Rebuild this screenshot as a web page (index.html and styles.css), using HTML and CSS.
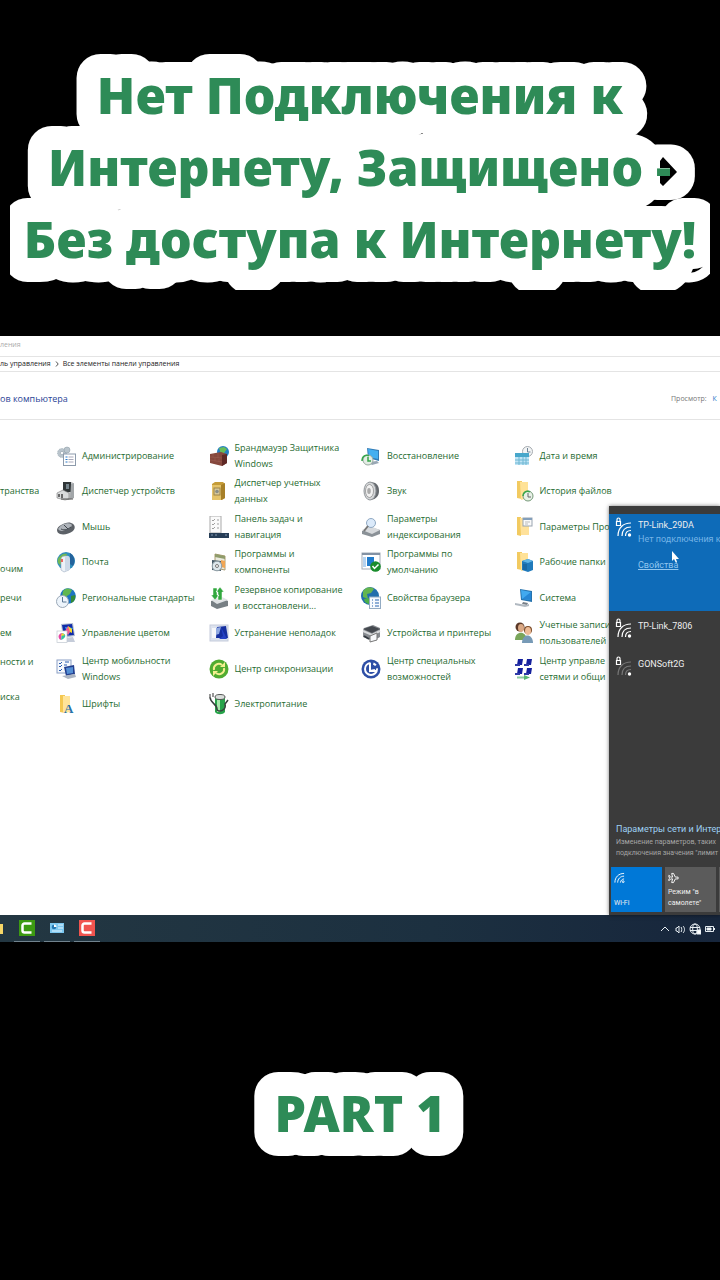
FILE: index.html
```
<!DOCTYPE html>
<html lang="ru">
<head>
<meta charset="utf-8">
<meta name="viewport" content="width=device-width, initial-scale=1">
<title>Нет Подключения к Интернету</title>
<link rel="stylesheet" href="styles.css">
</head>
<body>
<header class="intro">
  <h1>
    <svg class="caption" viewBox="0 0 700 240">
      <text x="350" y="64">Нет Подключения к</text>
      <text x="350" y="136">Интернету, Защищено -</text>
      <text x="350" y="208">Без доступа к Интернету!</text>
      <path d="M653 107L667 122L653 136L650 133V126H660V118H650V111Z"/>
    </svg>
  </h1>
</header>

<main class="desktop">
  <section class="window">
    <div class="titlebar">ления</div>
    <nav class="address"><a href="#">ль управления</a><svg viewBox="0 0 4 6" aria-hidden="true"><path d="M1 0.5L3.2 3L1 5.5"/></svg><a href="#">Все элементы панели управления</a></nav>
    <div class="heading">
      <h2>ов компьютера</h2>
      <span class="view">Просмотр: <a href="#">К</a></span>
    </div>
    <div class="items">
      <ul class="col cut">
        <li class="r2"><a href="#">транства</a></li>
        <li class="r4 low"><a href="#">очим</a></li>
        <li class="r5"><a href="#">речи</a></li>
        <li class="r6"><a href="#">ем</a></li>
        <li class="r7 high"><a href="#">ности и</a></li>
        <li class="r8 high"><a href="#">иска</a></li>
      </ul>
      <ul class="col">
        <li><a href="#"><svg viewBox="0 0 20 20"><g fill="#b9c4cc" stroke="#8796a1" stroke-width=".5"><circle cx="6" cy="7" r="4.5" stroke-dasharray="1.5 1"/><circle cx="11" cy="4" r="3"/><circle cx="6" cy="7" r="1.6" fill="#fff"/></g><rect x="7.500" y="8" width="12" height="11.500" fill="#fff" stroke="#8c9aab"/><path d="M9.500 11h2M9.500 13.500h2M9.500 16h2" stroke="#2878c8" stroke-width="1.200"/><path d="M12.500 11h5M12.500 13.500h5M12.500 16h5" stroke="#aab"/></svg><span>Администрирование</span></a></li>
        <li><a href="#"><svg viewBox="0 0 20 20"><path d="M7 1h9l2 2v14l-5 2H7z" fill="#c3c5c7"/><path d="M7 1h8v10H7z" fill="#303638"/><path d="M10 3h3v5h-3z" fill="#75848c"/><path d="M15 3l3-1v15l-4 1z" fill="#a2a6a9"/><path d="M1 12l6-3 6 3v6l-4 1-8-2z" fill="#d9dbdc" stroke="#777" stroke-width=".6"/><path d="M3 13v3M6 13v4" stroke="#444" stroke-width="1.500"/><path d="M5 18h12" stroke="#555"/></svg><span>Диспетчер устройств</span></a></li>
        <li><a href="#"><svg viewBox="0 0 20 20"><path d="M1 13C1 9 11 4 15 6c4 1 5 5 2 8-4 3-9 4-13 3-2-1-3-2-3-4z" fill="#5c6167"/><path d="M2 12c3-5 9-7 13-5 2 1 0 4-3 5-4 2-8 3-10 0z" fill="#aeb3b9"/><path d="M8 8l4 4M5 12c4 2 7 0 10-2" stroke="#3f454b" fill="none"/></svg><span>Мышь</span></a></li>
        <li><a href="#"><svg viewBox="0 0 20 20"><circle cx="10" cy="9" r="9" fill="#318ebd"/><path d="M3 5c3-3 5-4 8-3l-2 5-5 6C1 11 1 8 3 5z" fill="#72b856"/><path d="M14 1c4 2 6 8 3 13l-3-2z" fill="#24639c"/><path d="M5 7c0-4 8-4 8 0v11l-5 2-3-2z" fill="#edf2f8" stroke="#9aabbf" stroke-width=".6"/><path d="M9 6c0-3 5-3 5 1v10l-5 2z" fill="#ccd9e8"/><path d="M6 7v3" stroke="#ea3c33" stroke-width="1.500"/></svg><span>Почта</span></a></li>
        <li><a href="#"><svg viewBox="0 0 20 20"><circle cx="12" cy="8" r="7.800" fill="#1d74c2"/><path d="M7 3c4-4 7-2 9-1l-2 4-3 2-1 4-4-3z" fill="#60b750"/><path d="M15 8l4-1c1 4-1 7-4 8z" fill="#338a38"/><circle cx="6.500" cy="13.500" r="6" fill="#edf4fb" stroke="#9ba8b7"/><path d="M6.500 9v5h4" fill="none" stroke="#5d7894"/></svg><span>Региональные стандарты</span></a></li>
        <li><a href="#"><svg viewBox="0 0 20 20"><path d="M5 1l12-1 2 13-12 2z" fill="#b4bfd2"/><path d="M6 2l10-1 2 11-10 1z" fill="#112ca8"/><path d="M9 4l3 8 5-7z" fill="#34a7ee"/><path d="M12 3v5l4 2V6z" fill="#f7d92d"/><path d="M12 3l-3 5 3 4 2-3z" fill="#ef5c92"/><path d="M9 15l8-1 2 5H9z" fill="#c5ccd9"/><rect x="1" y="8" width="10" height="11.500" fill="#fff" stroke="#c1c8d0" stroke-width=".7"/><path d="M6 10c-5 1-4 6-1 7z" fill="#e647a4"/><path d="M6 10c5 1 4 5-1 7z" fill="#35c0a0"/><path d="M6 10l3 2-4 1z" fill="#ffd52c"/></svg><span>Управление цветом</span></a></li>
        <li><a href="#"><svg viewBox="0 0 20 20"><rect x="1" y="1" width="14" height="13" fill="#f7f9fc" stroke="#8ba0c5"/><path d="M3 4l1 1 2-2M3 7l1 1 2-2M3 11l1 1 2-2M9 3h4M8 6h3" fill="none" stroke="#285cb1"/><path d="M8 8l10-2 1 9-9 2z" fill="#233f8f"/><path d="M10 9l7-1v6l-6 1z" fill="#548fd5"/><path d="M6 17l13-2 1 3-8 2z" fill="#abb4c2"/></svg><span>Центр мобильности Windows</span></a></li>
        <li><a href="#"><svg viewBox="0 0 20 20"><path d="M4 1h5v18l-5-1z" fill="#f4c852"/><path d="M7 2h7v16l-5 1H7z" fill="#ffe49a"/><text x="8" y="19" class="glyph">A</text></svg><span>Шрифты</span></a></li>
      </ul>
      <ul class="col">
        <li><a href="#"><svg viewBox="0 0 20 20"><circle cx="14" cy="6" r="6" fill="#2580c3"/><path d="M10 2l5-1 3 2-3 4-3 1z" fill="#69bd58"/><path d="M1 8l11-2 6 2v9l-5 3-12-3z" fill="#86483d"/><path d="M13 9l5-1v9l-5 3z" fill="#5f2926"/><path d="M1 11l12 1M1 14l12 2M4 8v3M9 7v5M6 12v3M10 13v3" stroke="#a5685d" stroke-width=".4"/></svg><span>Брандмауэр Защитника Windows</span></a></li>
        <li><a href="#"><svg viewBox="0 0 20 20"><path d="M3 3l3-2h8l2 2v14l-3 2H3z" fill="#c59c38"/><path d="M3 4h9v15H3z" fill="#e5c369"/><path d="M12 4l4-2v15l-4 2z" fill="#a78028"/><rect x="5" y="7" width="6" height="7" fill="#d7c99b" stroke="#9c8348"/><circle cx="8" cy="10.500" r="1.800" fill="#8a8d83"/></svg><span>Диспетчер учетных данных</span></a></li>
        <li><a href="#"><svg viewBox="0 0 20 22"><rect x="1" y="0" width="11" height="17" fill="#fafafa" stroke="#aaa"/><path d="M3 4l1 1 2-2M3 8l1 1 2-2M3 12l1 1 2-2M8 4h2M8 8h2M8 12h2" fill="none" stroke="#777" stroke-width=".7"/><rect x="0" y="17" width="20" height="5" fill="#263d56"/><path d="M2 19h2M6 19h2M16 19h2" stroke="#8299b1"/></svg><span>Панель задач и навигация</span></a></li>
        <li><a href="#"><svg viewBox="0 0 20 20"><path d="M6 2l10 2v14l-10-2z" fill="#e9eadf" stroke="#ad9d70"/><path d="M6 2l10 2v3L6 5z" fill="#8f9c6b"/><path d="M12 8l4 1v7l-4-1z" fill="#f2a654"/><path d="M3 8l9 1v10l-9-1z" fill="#465a68"/><circle cx="8" cy="14" r="4.800" fill="#dce6eb" stroke="#8c9ba3"/><circle cx="8" cy="14" r="1.500" fill="#fff" stroke="#777"/></svg><span>Программы и компоненты</span></a></li>
        <li><a href="#"><svg viewBox="0 0 20 22"><path d="M2 14l11-3 6 3v5l-11 3-6-3z" fill="#777f84"/><path d="M2 13l11-3 6 3-11 4z" fill="#dfe2e4"/><path d="M4 1h4v7h2l-4 5-4-5h2zM13 13V5h2l-4-5-4 5h2v8z" fill="#31a83e" stroke="#fff" stroke-width=".5"/></svg><span>Резервное копирование и восстановлени...</span></a></li>
        <li><a href="#"><svg viewBox="0 0 20 20"><rect x="1" y="2" width="18" height="16" fill="#dce2ee" stroke="#c5ccdb"/><path d="M8 4l9-1 2 12H7z" fill="#162f9f"/><path d="M7 5l5-1-2 7-4 1z" fill="#90a9e1"/><path d="M12 4l2 9-4 3h8" fill="#2541c4"/><rect x="3" y="5" width="4" height="10" fill="#f6f7fa"/></svg><span>Устранение неполадок</span></a></li>
        <li><a href="#"><svg viewBox="0 0 20 20"><circle cx="10" cy="10" r="9.500" fill="#51ac31"/><path d="M5 11a5 5 0 0 1 8-5M15 9a5 5 0 0 1-8 5" fill="none" stroke="#f5ef90" stroke-width="2"/><path d="M11 8h5V3zM9 12H4v5z" fill="#f5ef90"/></svg><span>Центр синхронизации</span></a></li>
        <li><a href="#"><svg viewBox="0 0 20 22"><path d="M6 5h10v14c-2 3-8 3-10 0z" fill="#27a34a"/><path d="M8 7h3v12H8z" fill="#a5e7aa"/><ellipse cx="11" cy="4" rx="5" ry="2.500" fill="#d9dedb" stroke="#555"/><path d="M1 4c0 6 7 7 7 12 0 4 10 2 8-5l3-4" fill="none" stroke="#383f3e" stroke-width="1.500"/><path d="M1 1v4M4 0v4" stroke="#777" stroke-width="1.500"/></svg><span>Электропитание</span></a></li>
      </ul>
      <ul class="col">
        <li><a href="#"><svg viewBox="0 0 20 20"><path d="M6 2l12 2v11L7 12z" fill="#327bb5"/><path d="M7 3l10 2v8L8 11z" fill="#44aff0"/><path d="M7 16l9-1 2 2-7 2z" fill="#98a7b4"/><circle cx="7" cy="14" r="5" fill="#e4ede5" stroke="#99aaa0"/><path d="M1 15c0-5 4-7 7-5M7 11v4h3" fill="none" stroke="#36a54a" stroke-width="1.500"/></svg><span>Восстановление</span></a></li>
        <li><a href="#"><svg viewBox="0 0 20 20"><path d="M9 1c7 0 9 4 9 9s-3 8-8 9z" fill="#65696e"/><ellipse cx="9" cy="10" rx="6" ry="9" fill="#d4d6d8" stroke="#92979b"/><ellipse cx="8.500" cy="10" rx="4" ry="6.500" fill="#f1f1f1" stroke="#777" stroke-width=".6"/><ellipse cx="8" cy="10" rx="1.800" ry="3" fill="#aaa"/></svg><span>Звук</span></a></li>
        <li><a href="#"><svg viewBox="0 0 20 20"><path d="M1 14l8-4 10 3v4l-8 3-10-3z" fill="#8a9197"/><path d="M1 13l8-4 10 4-8 4z" fill="#d7dadd"/><circle cx="10" cy="6" r="4.500" fill="#dbeafa" stroke="#90a9c3"/><path d="M7 9l-4 5" stroke="#777" stroke-width="2"/></svg><span>Параметры индексирования</span></a></li>
        <li><a href="#"><svg viewBox="0 0 20 20"><rect x="1" y="1" width="18" height="16" fill="#fff" stroke="#a2abb6"/><path d="M1 2h18" stroke="#8392a4" stroke-width="2"/><path d="M6 5h7v9H6z" fill="#217ccc"/><path d="M2 5h3v10H2z" fill="#b6d3ef"/><circle cx="14.500" cy="14.500" r="5.300" fill="#198c2c"/><path d="M11.500 14l2 2.500 4-4" fill="none" stroke="#fff" stroke-width="1.500"/></svg><span>Программы по умолчанию</span></a></li>
        <li><a href="#"><svg viewBox="0 0 20 22"><circle cx="9" cy="9" r="9" fill="#226eac"/><path d="M2 4c4-5 9-4 11-2l-3 4-4 1 1 5-5-2z" fill="#64b54f"/><path d="M3 12l5-1 1 6c-3 0-6-2-6-5z" fill="#4caf49"/><rect x="8.500" y="10" width="11" height="11.500" fill="#f7fafe" stroke="#93abc3"/><path d="M11 13h1M11 16h1M11 19h1M14 13h4M14 16h4M14 19h4" stroke="#2865af"/></svg><span>Свойства браузера</span></a></li>
        <li><a href="#"><svg viewBox="0 0 20 20"><path d="M3 5l9-3 7 3v9l-7 4-10-4V8z" fill="#878b90"/><path d="M2 6l9-3 8 3-8 4z" fill="#45494f"/><path d="M2 8l9 4 8-4" fill="none" stroke="#d7d9db" stroke-width="2"/><path d="M9 13l7-3v7l-7 2z" fill="#f6f8fa" stroke="#777"/><path d="M3 13l5 3" stroke="#343a40" stroke-width="2"/></svg><span>Устройства и принтеры</span></a></li>
        <li><a href="#"><svg viewBox="0 0 20 20"><circle cx="10" cy="10" r="9.500" fill="#2e4fa6"/><circle cx="10" cy="10" r="6" fill="none" stroke="#fff" stroke-width="2" stroke-dasharray="27 3 3 3"/><path d="M9 4v8l5-1M9 12h6" stroke="#fff" stroke-width="2" fill="none"/></svg><span>Центр специальных возможностей</span></a></li>
      </ul>
      <ul class="col">
        <li><a href="#"><svg viewBox="0 0 20 20"><circle cx="13.500" cy="5.500" r="5" fill="#f2f4f5" stroke="#a6abb0"/><path d="M13.500 2v4h3" fill="none" stroke="#708596"/><path d="M1 7h14v12H1z" fill="#c0e4f5"/><path d="M1 7h14v4H1z" fill="#47a7cb"/><path d="M1 14h14M1 17h14M5 11v8M9 11v8M12 11v8" stroke="#6eb7d3"/></svg><span>Дата и время</span></a></li>
        <li><a href="#"><svg viewBox="0 0 20 20"><path d="M3 0h5v18l-5-1z" fill="#f2ca60"/><path d="M6 1h8v16l-7 2z" fill="#ffe297"/><circle cx="14" cy="15" r="5" fill="#e8f1e7" stroke="#759978"/><path d="M14 12v4h3" fill="none" stroke="#666"/><path d="M9 15c0-4 4-6 7-4" fill="none" stroke="#39a44b" stroke-width="1.500"/></svg><span>История файлов</span></a></li>
        <li><a href="#"><svg viewBox="0 0 20 20"><path d="M3 0h4v19l-4-1z" fill="#f2ca60"/><path d="M6 1h9v17H7z" fill="#ffe19a"/><rect x="9" y="1" width="9" height="8" fill="#fafafa" stroke="#9aa5b1"/><path d="M9 2h9" stroke="#839fbb" stroke-width="2"/><path d="M11 5h5M11 7h3" stroke="#bbb"/></svg><span>Параметры Про</span></a></li>
        <li><a href="#"><svg viewBox="0 0 20 20"><path d="M3 0h5v18l-5-1z" fill="#f2ca60"/><path d="M6 1h8v16l-7 2z" fill="#ffe297"/><path d="M8 9l6-2 5 2v9l-5 2-6-2z" fill="#207abb"/><path d="M8 9l6-2 5 2-5 2z" fill="#5fb5e7"/><path d="M10 12v6M12 12v6" stroke="#15588d"/></svg><span>Рабочие папки</span></a></li>
        <li><a href="#"><svg viewBox="0 0 20 20"><path d="M6 1l12 2v11L7 12z" fill="#2673ae"/><path d="M7 2l10 2v8L8 11z" fill="#41a9ef"/><path d="M8 11l9-7v8z" fill="#2686d5"/><path d="M9 14l5 1-1 2-5-1z" fill="#777f88"/><path d="M1 15l11 2 3-1v2l-4 1-10-2z" fill="#b0b8c0"/></svg><span>Система</span></a></li>
        <li><a href="#"><svg viewBox="0 0 20 22"><circle cx="6" cy="5" r="4.500" fill="#5b3827"/><ellipse cx="7" cy="6" rx="3" ry="4" fill="#dba985"/><path d="M1 18c0-9 11-10 12 0z" fill="#79a55a"/><circle cx="14" cy="8" r="4" fill="#7b4b28"/><ellipse cx="14" cy="9" rx="3" ry="4" fill="#efbd98"/><path d="M8 21c0-10 11-10 11 0z" fill="#779ab6"/></svg><span>Учетные записи пользователей</span></a></li>
        <li><a href="#"><svg viewBox="0 0 20 22"><path d="M4 1h5l-1 6H3zM13 1h5l-1 6h-5zM4 10h5l-1 6H3zM13 10h5l-1 6h-5z" fill="#15209d"/><path d="M1 6h5v2H1zM10 6h5v2h-5zM1 15h5v2H1zM10 15h5v2h-5z" fill="#2f3aa8"/><path d="M3 19.500h10" stroke="#8fcba0" stroke-width="2"/><path d="M10 17l6 2.500-6 2.500z" fill="#58b871"/></svg><span>Центр управле<br>сетями и общи</span></a></li>
      </ul>
    </div>
  </section>

  <aside class="flyout">
    <ul class="networks">
      <li class="network active">
        <svg class="signal" viewBox="0 0 18 22"><path d="M2 4V2.500a1.500 1.500 0 0 1 3 0V4M1.500 4.500h4v4h-4z"/><path d="M3 19C3 11 8 6 16 6M7 19c0-6 3-9 9-9M10.500 19c0-4 2-5.500 5.500-5.500"/><circle cx="14.500" cy="18" r="1.700"/></svg>
        <div><strong>TP-Link_29DA</strong><p>Нет подключения к</p><a href="#">Свойства</a></div>
        <svg class="cursor" viewBox="0 0 8 12" aria-hidden="true"><path d="M1 0v10l2-2 2 4 1-1-1-3h3z"/></svg>
      </li>
      <li class="network">
        <svg class="signal" viewBox="0 0 18 22"><path d="M2 4V2.500a1.500 1.500 0 0 1 3 0V4M1.500 4.500h4v4h-4z"/><path d="M3 19C3 11 8 6 16 6M7 19c0-6 3-9 9-9M10.500 19c0-4 2-5.500 5.500-5.500"/><circle cx="14.500" cy="18" r="1.700"/></svg>
        <strong>TP-Link_7806</strong>
      </li>
      <li class="network">
        <svg class="signal" viewBox="0 0 18 22"><path d="M2 4V2.500a1.500 1.500 0 0 1 3 0V4M1.500 4.500h4v4h-4z"/><path class="faint" d="M3 19C3 11 8 6 16 6M7 19c0-6 3-9 9-9M10.500 19c0-4 2-5.500 5.500-5.500"/><circle cx="14.500" cy="18" r="1.700"/></svg>
        <strong>GONSoft2G</strong>
      </li>
    </ul>
    <div class="settings">
      <a href="#">Параметры сети и Интер</a>
      <p>Изменение параметров, таких<br>подключения значения "лимит</p>
    </div>
    <div class="tiles">
      <button class="tile on" type="button"><svg viewBox="0 0 12 12"><path d="M1 11C1 5 5 1 11 1M4 11c0-4 3-7 7-7M7 11c0-2 2-4 4-4"/><circle cx="10" cy="10" r="1"/></svg><span>Wi-Fi</span></button>
      <button class="tile" type="button"><svg viewBox="0 0 12 12"><path d="M1 3l2 2h2L4 1h2l2 4h3v2H8l-2 4H4l1-4H3L1 9V7l1-1-1-1z"/></svg><span>Режим "в самолете"</span></button>
      <button class="tile" type="button" aria-label="Точка доступа"></button>
    </div>
  </aside>

  <footer class="taskbar">
    <div class="apps">
      <button type="button" aria-label="Проводник"><svg class="edge" viewBox="0 0 3 12"><path d="M0 1h3v10H0z" fill="#f5d667"/></svg></button>
      <button type="button" aria-label="Camtasia"><svg viewBox="0 0 16 16"><path d="M0 0h16v16H0z" fill="#3c9a12"/><path d="M12.500 3.500h-7a2 2 0 0 0-2 2v5a2 2 0 0 0 2 2h7" fill="none" stroke="#fff" stroke-width="2.500"/></svg></button>
      <button type="button" aria-label="Панель управления"><svg viewBox="0 0 16 16"><path d="M1 3h14v10H1z" fill="#7cc7ef"/><circle cx="5" cy="7" r="2.300" fill="#2478b2"/><path d="M5 7V4.500A2.500 2.500 0 0 1 7.500 7z" fill="#fff"/><path d="M9 5h5M9 8h5M3 11h10" stroke="#e4f5ff"/></svg></button>
      <button type="button" aria-label="Запись экрана"><svg viewBox="0 0 16 16"><path d="M0 0h16v16H0z" fill="#f0544f"/><path d="M12.500 3.500h-7a2 2 0 0 0-2 2v5a2 2 0 0 0 2 2h7" fill="none" stroke="#fff" stroke-width="2.500"/></svg></button>
    </div>
    <div class="tray">
      <svg viewBox="0 0 12 12"><path d="M2 8l4-4 4 4"/></svg>
      <svg viewBox="0 0 12 12"><path d="M2 5v3h1l2 2V3L3 5zM7 4c1 1 1 4 0 5M9 3c2 2 2 5 0 7"/></svg>
      <svg viewBox="0 0 12 12"><circle cx="6" cy="6" r="5"/><ellipse cx="6" cy="6" rx="2.300" ry="5"/><path d="M1 4.500h10M1 7.500h7"/><path d="M8 7h4v4H8z" fill="#fff"/></svg>
      <svg viewBox="0 0 12 12"><path d="M1.500 3.500h8v5h-8zM10.500 5v2"/><path d="M3 5h4v2H3z" fill="#fff"/></svg>
    </div>
  </footer>
</main>

<section class="outro">
  <svg class="caption part" viewBox="0 0 212 86"><text x="106" y="62">PART 1</text></svg>
</section>
</body>
</html>
```
FILE: styles.css
```
* { box-sizing: border-box; }
body { margin: 0; background: #000; font-family: "Open Sans", "Noto Sans", sans-serif; overflow-x: hidden; }
h1, h2, p, ul { margin: 0; padding: 0; font-weight: inherit; }
ul { list-style: none; }
a { color: inherit; text-decoration: none; }
button { margin: 0; padding: 0; border: 0; background: none; font: inherit; color: inherit; }

.intro { padding: 50px 10px 46px; }
.caption { display: block; width: 100%; overflow: hidden; }
.caption text {
  font: 900 50px "Noto Sans", sans-serif;
  text-anchor: middle;
  fill: #2e8b57;
  stroke: #fff;
  stroke-width: 48px;
  stroke-linejoin: round;
  paint-order: stroke;
}

.desktop { position: relative; background: #fff; overflow: hidden; font-size: 9px; line-height: 16px; }
.window { min-height: 579px; }
.titlebar { height: 20px; font-size: 7px; color: #aaa; line-height: 17px; }
.address { display: flex; align-items: center; gap: 4px; height: 16px; border: 1px solid #e4e4e4; border-width: 1px 0; font-size: 7px; color: #222; white-space: nowrap; }
.address svg { width: 4px; height: 6px; fill: none; stroke: #555; }
.heading { display: flex; justify-content: space-between; align-items: center; height: 48px; padding-top: 7px; border-bottom: 1px solid #e4e4e4; }
.heading h2 { font-size: 9px; color: #2a4496; }
.view { width: 49px; font-size: 7px; line-height: 12px; color: #777; white-space: nowrap; }
.view a { margin-left: 4px; color: #2878c8; }

.items { display: grid; grid-template-columns: 56px repeat(4, 1fr); padding: 18px 54px 0 0; color: #1f6b31; }
.col { display: grid; grid-template-rows: repeat(8, 1fr); height: 284px; }
.col li { display: flex; align-items: center; min-height: 0; }
.col li a { display: flex; align-items: center; gap: 6px; min-width: 0; }
.col svg { flex: none; width: 20px; height: 22px; }
.col a span { max-width: 116px; }
.glyph { font: bold 13px "Liberation Serif", serif; fill: #2772a8; }
.cut li { white-space: nowrap; }
.r2 { grid-row: 2; }
.r4 { grid-row: 4; }
.r5 { grid-row: 5; }
.r6 { grid-row: 6; }
.r7 { grid-row: 7; }
.r8 { grid-row: 8; }
.cut .low { padding-top: 14px; }
.cut .high { padding-bottom: 14px; }

.flyout { position: absolute; right: 0; top: 170px; bottom: 27px; width: 111px; padding-top: 8px; display: flex; flex-direction: column; overflow: hidden; background: #3b3b3b; box-shadow: 0 0 4px #0008; color: #eee; font-family: Roboto, sans-serif; white-space: nowrap; }
.network { position: relative; display: flex; gap: 5px; height: 38px; padding: 3px 0 0 6px; }
.network.active { height: 97px; margin-bottom: 4px; background: #0e6bb8; }
.network strong { font-weight: 400; line-height: 16px; }
.network p { line-height: 12px; color: #75b4e7; }
.network a { display: block; padding-top: 12px; line-height: 16px; color: #91c6ef; text-decoration: underline; }
.signal { flex: none; width: 18px; height: 22px; fill: none; stroke: #fff; stroke-width: 1.2; }
.signal circle { fill: #fff; stroke: none; }
.signal .faint { stroke: #777; }
.cursor { position: absolute; left: 62px; top: 37px; width: 8px; height: 12px; fill: #fff; }
.settings { margin-top: auto; padding: 0 0 8px 7px; }
.settings a { color: #9ed0f3; }
.settings p { font-size: 7px; line-height: 11px; color: #a5a5a5; }
.tiles { display: grid; grid-template-columns: 51px 51px 51px; gap: 3px; padding: 0 0 3px 2px; }
.tile { display: flex; flex-direction: column; justify-content: space-between; align-items: flex-start; height: 45px; padding: 5px 3px 3px; background: #5b5b5b; font-size: 7px; line-height: 11px; text-align: left; white-space: normal; }
.tile.on { background: #0078d7; }
.tile svg { width: 11px; height: 12px; fill: none; stroke: #fff; }

.taskbar { display: flex; align-items: center; justify-content: space-between; height: 27px; padding-right: 4px; background: linear-gradient(90deg, #233742, #1c3040 60%, #17263c); }
.apps { display: flex; height: 27px; gap: 4px; }
.apps button { display: flex; align-items: center; justify-content: center; width: 26px; border-bottom: 1px solid #71838e; }
.apps button:first-child { width: 10px; justify-content: flex-start; border: 0; }
.apps svg { width: 16px; height: 16px; }
.apps .edge { width: 3px; height: 12px; }
.tray { display: flex; gap: 3px; }
.tray svg { width: 12px; height: 12px; fill: none; stroke: #e6edf2; }

.outro { display: flex; justify-content: center; padding: 128px 0 124px; }
.part { width: 212px; }
```
